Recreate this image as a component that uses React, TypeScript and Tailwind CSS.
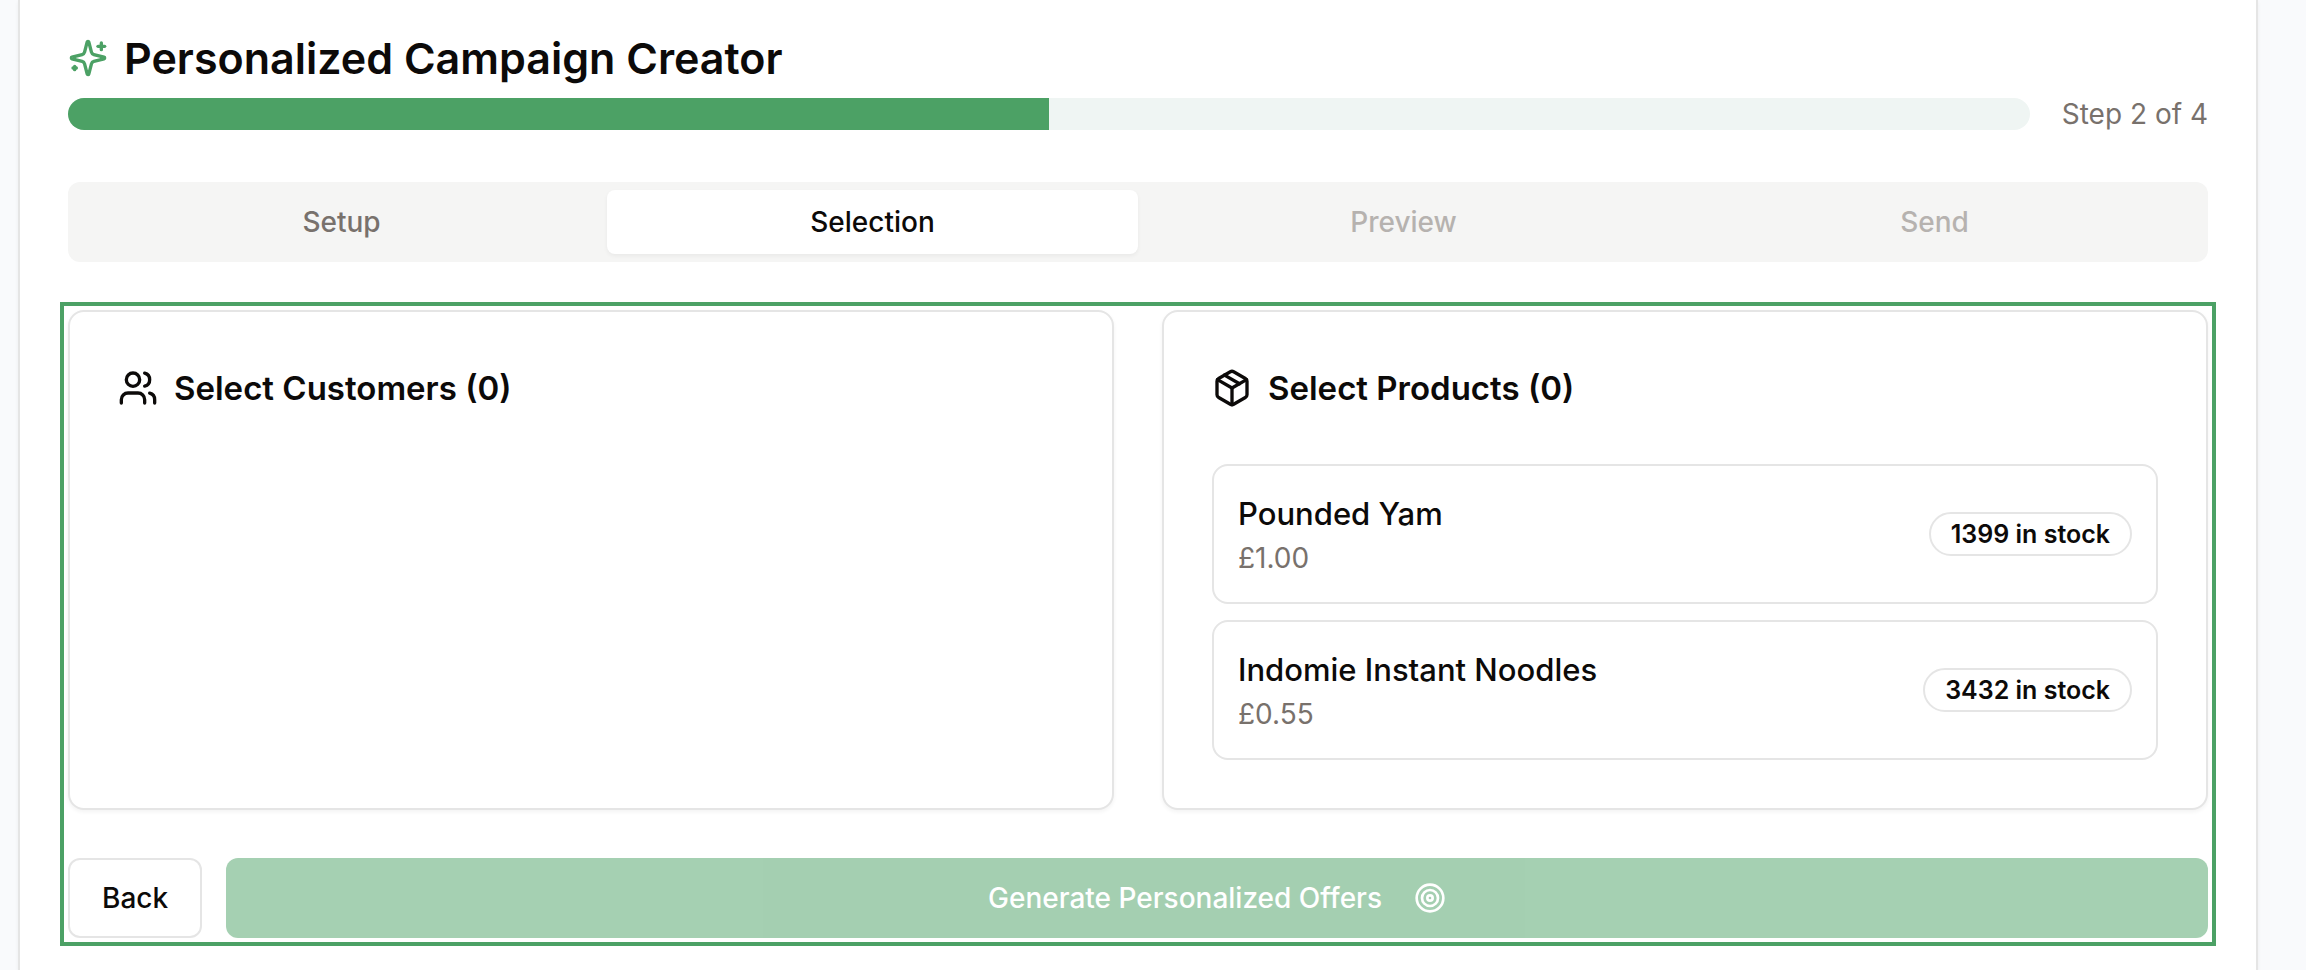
import { Package, Target, Users } from "lucide-react";

const steps = [
  { label: "Setup", state: "done" },
  { label: "Selection", state: "active" },
  { label: "Preview", state: "locked" },
  { label: "Send", state: "locked" },
];

const tabStyles: Record<string, string> = {
  done: "text-[#78716c]",
  active: "bg-white text-[#0c0a09] shadow-[0_2px_4px_rgba(0,0,0,0.05)]",
  locked: "text-[#78716c] opacity-50",
};

const products = [
  { name: "Pounded Yam", price: "£1.00", stock: 1399 },
  { name: "Indomie Instant Noodles", price: "£0.55", stock: 3432 },
];

function SparklesIcon() {
  return (
    <svg
      className="size-10 shrink-0 text-[#4ca165]"
      viewBox="0 0 24 24"
      fill="none"
      stroke="currentColor"
      strokeWidth="2"
      strokeLinecap="round"
      strokeLinejoin="round"
      aria-hidden="true"
    >
      <path d="M9.937 15.5A2 2 0 0 0 8.5 14.063l-6.135-1.582a.5.5 0 0 1 0-.962L8.5 9.936A2 2 0 0 0 9.937 8.5l1.582-6.135a.5.5 0 0 1 .963 0L14.063 8.5A2 2 0 0 0 15.5 9.937l6.135 1.581a.5.5 0 0 1 0 .964L15.5 14.063a2 2 0 0 0-1.437 1.437l-1.582 6.135a.5.5 0 0 1-.963 0z" />
      <path d="M20 3v4" />
      <path d="M22 5h-4" />
      <path d="M4 17v2" />
      <path d="M5 18H3" />
    </svg>
  );
}

function StepTabs() {
  return (
    <div role="tablist" className="mt-12 grid h-20 grid-cols-4 rounded-xl bg-[#f5f5f4] p-2">
      {steps.map((step) => (
        <button
          key={step.label}
          type="button"
          role="tab"
          aria-selected={step.state === "active"}
          disabled={step.state === "locked"}
          className={`rounded-lg text-[28px] leading-10 font-medium ${tabStyles[step.state]}`}
        >
          {step.label}
        </button>
      ))}
    </div>
  );
}

function Panel({ icon, title, children }: { icon: React.ReactNode; title: string; children?: React.ReactNode }) {
  return (
    <section className="rounded-2xl border-2 border-[#e5e5e5] bg-white p-12 shadow-[0_2px_4px_rgba(0,0,0,0.05)]">
      <h2 className="flex items-center gap-4 text-[33px] leading-14 font-semibold">
        {icon}
        {title}
      </h2>
      {children}
    </section>
  );
}

export default function App() {
  return (
    <div className="min-h-screen bg-[#f9fafc] pr-12 pl-[18px] font-[Inter,sans-serif] text-[#0c0a09]">
      <main className="min-h-screen border-x-2 border-[#e5e5e5] bg-white px-12 pt-[34px] shadow-[0_2px_4px_rgba(0,0,0,0.05)]">
        <h1 className="flex items-center gap-4 text-[43px] leading-12 font-semibold">
          <SparklesIcon />
          Personalized Campaign Creator
        </h1>

        <div className="mt-3 flex h-10 items-center gap-8">
          <div
            role="progressbar"
            aria-label="Campaign progress"
            aria-valuenow={50}
            aria-valuemin={0}
            aria-valuemax={100}
            className="h-8 flex-1 overflow-hidden rounded-full bg-[#eff5f3]"
          >
            <div className="h-full w-1/2 bg-[#4ca165]" />
          </div>
          <span className="text-[28px] leading-10 text-[#78716c]">Step 2 of 4</span>
        </div>

        <StepTabs />

        <div role="tabpanel" className="mt-12 outline-4 outline-offset-4 outline-[#4ca165]">
          <div className="grid grid-cols-2 gap-12">
            <Panel icon={<Users className="size-10" />} title="Select Customers (0)" />
            <Panel icon={<Package className="size-10" />} title="Select Products (0)">
              <ul className="mt-12 flex flex-col gap-4">
                {products.map((product) => (
                  <li
                    key={product.name}
                    className="flex items-center justify-between rounded-2xl border-2 border-[#e5e5e5] p-6"
                  >
                    <div>
                      <p className="text-[31px] leading-12 font-medium">{product.name}</p>
                      <p className="text-[28px] leading-10 text-[#78716c]">{product.price}</p>
                    </div>
                    <span className="rounded-full border-2 border-[#e5e5e5] px-5 py-1 text-[25px] leading-8 font-semibold">
                      {product.stock} in stock
                    </span>
                  </li>
                ))}
              </ul>
            </Panel>
          </div>

          <div className="mt-12 flex gap-6">
            <button
              type="button"
              className="h-20 rounded-xl border-2 border-[#e5e5e5] bg-white px-8 text-[28px] leading-10 font-medium"
            >
              Back
            </button>
            <button
              type="button"
              disabled
              className="flex h-20 flex-1 items-center justify-center gap-8 rounded-xl bg-[#4ca165] text-[28px] leading-10 font-medium text-white opacity-50"
            >
              Generate Personalized Offers
              <Target className="size-8" />
            </button>
          </div>
        </div>
      </main>
    </div>
  );
}
